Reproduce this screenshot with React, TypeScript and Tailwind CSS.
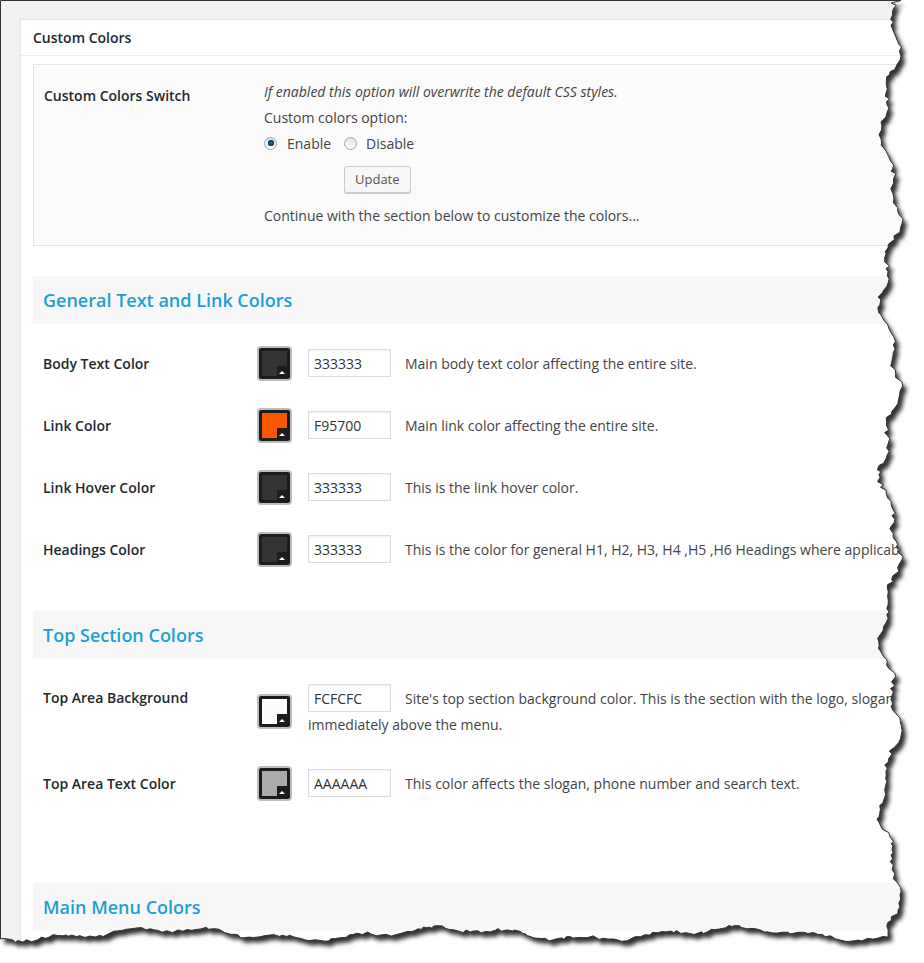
import { useMemo } from "react";

type ColorRow = {
  label: string;
  value: string;
  swatch: string;
  desc: string;
  more?: string;
};

const generalRows: ColorRow[] = [
  { label: "Body Text Color", value: "333333", swatch: "bg-[#333333]", desc: "Main body text color affecting the entire site." },
  { label: "Link Color", value: "F95700", swatch: "bg-[#f95700]", desc: "Main link color affecting the entire site." },
  { label: "Link Hover Color", value: "333333", swatch: "bg-[#333333]", desc: "This is the link hover color." },
  {
    label: "Headings Color",
    value: "333333",
    swatch: "bg-[#333333]",
    desc: "This is the color for general H1, H2, H3, H4 ,H5 ,H6 Headings where applicable.",
  },
];

const topRows: ColorRow[] = [
  {
    label: "Top Area Background",
    value: "FCFCFC",
    swatch: "bg-[#fcfcfc]",
    desc: "Site's top section background color. This is the section with the logo, slogan and phone number,",
    more: "immediately above the menu.",
  },
  {
    label: "Top Area Text Color",
    value: "AAAAAA",
    swatch: "bg-[#aaaaaa]",
    desc: "This color affects the slogan, phone number and search text.",
  },
];

function Swatch({ color }: { color: string }) {
  return (
    <div className="relative w-[35px] h-[35px] rounded-[4px] border-2 border-[#bdbdbd] bg-[#1c1c1c] p-[3px]">
      <div className={`w-full h-full ${color}`} />
      <div className="absolute right-[3px] bottom-[3px] w-[10px] h-[10px] bg-[#1c1c1c] flex items-end justify-center pb-[2px]">
        <div className="w-0 h-0 border-x-[3px] border-x-transparent border-b-[3px] border-b-white" />
      </div>
    </div>
  );
}

function HexInput({ value }: { value: string }) {
  return (
    <div className="shrink-0 w-[83px] h-[28px] border border-[#dddddd] bg-white shadow-[inset_0_1px_2px_rgba(0,0,0,0.07)] pl-[5px] flex items-center text-[14px] text-[#333]">
      {value}
    </div>
  );
}

function Band({ title }: { title: string }) {
  return (
    <div className="h-[48px] bg-[#f7f7f7] pl-[10px] flex items-center">
      <h3 className="text-[18px] font-semibold text-[#1e9fd4]">{title}</h3>
    </div>
  );
}

function Row({ row }: { row: ColorRow }) {
  if (row.more) {
    return (
      <div className="flex pl-[10px]">
        <div className="shrink-0 w-[214px] leading-[28px] text-[14px] font-semibold text-[#23282d]">{row.label}</div>
        <div className="shrink-0 w-[51px] self-center">
          <Swatch color={row.swatch} />
        </div>
        <div className="whitespace-nowrap text-[14px] text-[#444]">
          <div className="flex items-center">
            <HexInput value={row.value} />
            <span className="ml-[14px]">{row.desc}</span>
          </div>
          <div className="leading-[26px]">{row.more}</div>
        </div>
      </div>
    );
  }
  return (
    <div className="h-[62px] flex items-center pl-[10px]">
      <div className="shrink-0 w-[214px] text-[14px] font-semibold text-[#23282d]">{row.label}</div>
      <div className="shrink-0 w-[51px]">
        <Swatch color={row.swatch} />
      </div>
      <HexInput value={row.value} />
      <span className="ml-[14px] whitespace-nowrap text-[14px] text-[#444]">{row.desc}</span>
    </div>
  );
}

function Radio({ checked }: { checked?: boolean }) {
  return (
    <span className="w-[13px] h-[13px] rounded-full border border-[#9ea4a9] bg-gradient-to-b from-[#e4e4e4] to-[#fdfdfd] flex items-center justify-center">
      {checked && <span className="w-[6px] h-[6px] rounded-full bg-[#1b5c85] shadow-[inset_0_0_0_1px_#0f3f60]" />}
    </span>
  );
}

function mulberry(seed: number) {
  return () => {
    seed |= 0;
    seed = (seed + 0x6d2b79f5) | 0;
    let t = Math.imul(seed ^ (seed >>> 15), 1 | seed);
    t = (t + Math.imul(t ^ (t >>> 7), 61 | t)) ^ t;
    return ((t ^ (t >>> 14)) >>> 0) / 4294967296;
  };
}

// torn paper edge drawn over the right and bottom of the page
function TornEdge() {
  const paper = useMemo(() => {
    const rnd = mulberry(7);
    const pts: string[] = ["M0.5 0.5", "L901 0.5"];
    let y = 3;
    let lastX = 890;
    while (y < 932) {
      const x = 890 + 8 * Math.sin(y / 27) + 4 * Math.sin(y / 9 + 2) + (rnd() - 0.5) * 5;
      lastX = Math.min(903, x);
      pts.push(`L${lastX.toFixed(1)} ${y.toFixed(1)}`);
      y += 2 + rnd() * 3;
    }
    let x = lastX;
    while (x > 2) {
      const yy = 934 + 5 * Math.sin(x / 45 + 1) + 2.5 * Math.sin(x / 12) + (rnd() - 0.5) * 3;
      pts.push(`L${x.toFixed(1)} ${yy.toFixed(1)}`);
      x -= 2 + rnd() * 4;
    }
    pts.push("L0.5 939", "Z");
    return pts.join(" ");
  }, []);

  return (
    <svg className="absolute inset-0 pointer-events-none" width="924" height="963" viewBox="0 0 924 963">
      <defs>
        <filter id="tear-blur" x="-10%" y="-10%" width="120%" height="120%">
          <feGaussianBlur stdDeviation="2" />
        </filter>
        <mask id="tear-out">
          <rect width="924" height="963" fill="white" />
          <path d={paper} fill="black" />
        </mask>
      </defs>
      <path d={`M0 0H924V963H0Z ${paper}`} fill="white" fillRule="evenodd" />
      <g mask="url(#tear-out)">
        <path d={paper} transform="translate(4 5)" fill="#333" filter="url(#tear-blur)" />
      </g>
      <path d={paper} fill="none" stroke="#333" strokeWidth="1" />
    </svg>
  );
}

export default function App() {
  return (
    <div className="relative w-[924px] h-[963px] overflow-hidden bg-[#f1f1f1] font-['Open_Sans',sans-serif] text-[#444]">
      <div className="pl-[20px] pt-[19px]">
        <div className="w-[1000px] bg-white border border-[#e5e5e5] px-[12px] pb-[60px]">
          <div className="h-[36px] -mx-[12px] px-[12px] border-b border-[#eeeeee] flex items-center">
            <h2 className="text-[14px] font-semibold text-[#23282d]">Custom Colors</h2>
          </div>

          <div className="mt-[8px] border border-[#e5e5e5] bg-[#fbfbfb] pt-[14px] pb-[16px] pl-[10px] flex">
            <div className="shrink-0 w-[220px] mt-[4px] leading-[26px] text-[14px] font-semibold text-[#23282d]">
              Custom Colors Switch
            </div>
            <div className="text-[14px] text-[#444]">
              <p className="leading-[26px] italic">If enabled this option will overwrite the default CSS styles.</p>
              <p className="leading-[25px]">Custom colors option:</p>
              <div className="h-[26px] flex items-center">
                <label className="flex items-center">
                  <Radio checked />
                  <span className="ml-[10px]">Enable</span>
                </label>
                <label className="flex items-center ml-[13px]">
                  <Radio />
                  <span className="ml-[9px]">Disable</span>
                </label>
              </div>
              <button className="mt-[10px] ml-[80px] h-[27px] px-[10px] rounded-[3px] border border-[#cccccc] bg-[#f7f7f7] shadow-[0_1px_0_#cccccc] text-[13px] text-[#555]">
                Update
              </button>
              <p className="mt-[10px] leading-[26px]">Continue with the section below to customize the colors...</p>
            </div>
          </div>

          <div className="mt-[30px]">
            <Band title="General Text and Link Colors" />
          </div>
          <div className="mt-[8px]">
            {generalRows.map((r) => (
              <Row key={r.label} row={r} />
            ))}
          </div>

          <div className="mt-[31px]">
            <Band title="Top Section Colors" />
          </div>
          <div className="mt-[25px]">
            <Row row={topRows[0]} />
          </div>
          <div className="mt-[14px]">
            <Row row={topRows[1]} />
          </div>

          <div className="mt-[69px]">
            <Band title="Main Menu Colors" />
          </div>
        </div>
      </div>
      <TornEdge />
    </div>
  );
}
